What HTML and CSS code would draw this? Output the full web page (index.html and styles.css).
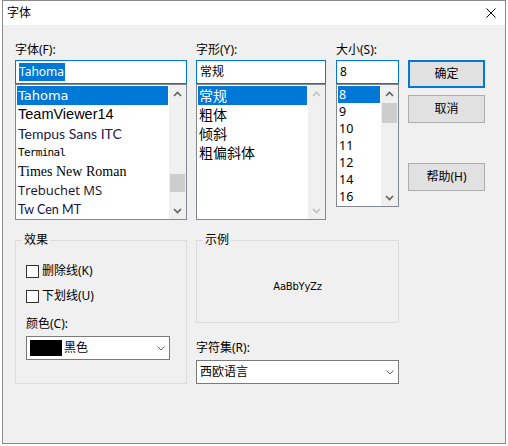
FILE: index.html
```html
<!DOCTYPE html>
<html lang="zh-CN">
<head>
<meta charset="utf-8">
<title>字体</title>
<link rel="stylesheet" href="styles.css">
</head>
<body>
<div class="window">
  <div class="titlebar">
    <span class="title">字体</span>
    <svg class="close" width="10" height="10" viewBox="0 0 10 10"><path d="M0.5 0.5 L9.5 9.5 M9.5 0.5 L0.5 9.5" stroke="#000" stroke-width="1" fill="none"/></svg>
  </div>
  <div class="content">
    <div class="top">
      <div class="col col-font">
        <div class="label">字体(F):</div>
        <div class="edit"><span class="sel">Tahoma</span></div>
        <div class="list list-font">
          <div class="items">
            <div class="item selected f-tahoma">Tahoma</div>
            <div class="item f-team">TeamViewer14</div>
            <div class="item f-tempus">Tempus Sans ITC</div>
            <div class="item f-terminal">Terminal</div>
            <div class="item f-times">Times New Roman</div>
            <div class="item f-treb">Trebuchet MS</div>
            <div class="item f-tw">Tw Cen MT</div>
          </div>
          <div class="vscroll">
            <div class="arrow"><svg width="9" height="6" viewBox="0 0 9 6"><path d="M1 5 L4.5 1.5 L8 5" class="caret"/></svg></div>
            <div class="track"><div class="thumb thumb-font"></div></div>
            <div class="arrow"><svg width="9" height="6" viewBox="0 0 9 6"><path d="M1 1 L4.5 4.5 L8 1" class="caret"/></svg></div>
          </div>
        </div>
      </div>
      <div class="col col-style">
        <div class="label">字形(Y):</div>
        <div class="edit">常规</div>
        <div class="list list-style">
          <div class="items">
            <div class="item selected">常规</div>
            <div class="item">粗体</div>
            <div class="item">倾斜</div>
            <div class="item">粗偏斜体</div>
          </div>
          <div class="vscroll disabled">
            <div class="arrow"><svg width="9" height="6" viewBox="0 0 9 6"><path d="M1 5 L4.5 1.5 L8 5" class="caret"/></svg></div>
            <div class="track"></div>
            <div class="arrow"><svg width="9" height="6" viewBox="0 0 9 6"><path d="M1 1 L4.5 4.5 L8 1" class="caret"/></svg></div>
          </div>
        </div>
      </div>
      <div class="col col-size">
        <div class="label">大小(S):</div>
        <div class="edit">8</div>
        <div class="list list-size">
          <div class="items">
            <div class="item selected">8</div>
            <div class="item">9</div>
            <div class="item">10</div>
            <div class="item">11</div>
            <div class="item">12</div>
            <div class="item">14</div>
            <div class="item">16</div>
          </div>
          <div class="vscroll">
            <div class="arrow"><svg width="9" height="6" viewBox="0 0 9 6"><path d="M1 5 L4.5 1.5 L8 5" class="caret"/></svg></div>
            <div class="track"><div class="thumb thumb-size"></div></div>
            <div class="arrow"><svg width="9" height="6" viewBox="0 0 9 6"><path d="M1 1 L4.5 4.5 L8 1" class="caret"/></svg></div>
          </div>
        </div>
      </div>
      <div class="buttons">
        <div class="btn default">确定</div>
        <div class="btn">取消</div>
        <div class="btn help">帮助(H)</div>
      </div>
    </div>
    <div class="bottom">
      <fieldset class="group effects">
        <legend>效果</legend>
        <div class="effects-body">
          <div class="check"><span class="box"></span>删除线(K)</div>
          <div class="check"><span class="box"></span>下划线(U)</div>
          <div class="label-color">颜色(C):</div>
          <div class="combo combo-color">
            <span class="swatch"></span><span class="combo-text">黑色</span>
            <svg class="chev" width="8" height="5" viewBox="0 0 8 5"><path d="M0.5 0.5 L4 4 L7.5 0.5" stroke="#606060" stroke-width="1" fill="none"/></svg>
          </div>
        </div>
      </fieldset>
      <div class="col-sample">
        <fieldset class="group sample">
          <legend>示例</legend>
          <div class="sample-body">AaBbYyZz</div>
        </fieldset>
        <div class="label-charset">字符集(R):</div>
        <div class="combo combo-charset">
          <span class="combo-text">西欧语言</span>
          <svg class="chev" width="8" height="5" viewBox="0 0 8 5"><path d="M0.5 0.5 L4 4 L7.5 0.5" stroke="#606060" stroke-width="1" fill="none"/></svg>
        </div>
      </div>
    </div>
  </div>
</div>
</body>
</html>
```

FILE: styles.css
```css
html, body {
  margin: 0;
  padding: 0;
  background: #ffffff;
}
body {
  font-family: "Noto Sans", "Noto Sans CJK SC", sans-serif;
  font-size: 12px;
  line-height: 16px;
  color: #000;
}
.window {
  margin-left: 2px;
  width: 502px;
  height: 442px;
  border: 1px solid #8a8a8a;
  background: #f0f0f0;
  display: flex;
  flex-direction: column;
}
.titlebar {
  height: 24px;
  background: #fff;
  display: flex;
  align-items: center;
  justify-content: space-between;
  padding: 0 9px 0 4px;
}
.title {
  font-size: 12px;
  line-height: 16px;
}
.close {
  display: block;
}
.content {
  padding: 17px 0 0 12px;
}
.top {
  display: flex;
  align-items: flex-start;
}
.col-font { width: 172px; }
.col-style { width: 130px; margin-left: 9px; }
.col-size { width: 63px; margin-left: 10px; }
.buttons {
  width: 77px;
  margin-left: 9px;
  margin-top: 18px;
  display: flex;
  flex-direction: column;
}
.label {
  height: 18px;
  line-height: 16px;
  white-space: nowrap;
}
.edit {
  height: 24px;
  box-sizing: border-box;
  border: 1px solid #0078d7;
  background: #fff;
  padding: 2px 3px;
  line-height: 18px;
  white-space: nowrap;
  overflow: hidden;
}
.sel {
  background: #0078d7;
  color: #fff;
  display: inline-block;
  padding: 0 1px 0 0;
}
.list {
  display: flex;
  box-sizing: border-box;
  border: 1px solid #828790;
  background: #fff;
}
.list-font, .list-style { height: 136px; }
.list-size { height: 123px; }
.items {
  flex: 1;
  min-width: 0;
  padding: 1px;
  overflow: hidden;
}
.item {
  height: 19px;
  line-height: 19px;
  padding-left: 1px;
  white-space: nowrap;
  overflow: hidden;
}
.item.selected {
  background: #0078d7;
  color: #fff;
}
.list-style .item {
  font-family: "Noto Sans CJK SC", sans-serif;
  font-size: 14px;
}
.list-size .item {
  height: 17px;
  line-height: 17px;
  font-size: 12.5px;
}
.f-tahoma { font-family: "DejaVu Sans", sans-serif; font-size: 13px; }
.f-team { font-family: "Liberation Sans", sans-serif; font-size: 14.5px; }
.f-tempus { font-family: "Lato", sans-serif; font-size: 14px; color: #20204a; }
.f-terminal { font-family: "DejaVu Sans Mono", monospace; font-size: 11px; letter-spacing: -0.7px; }
.f-times { font-family: "Liberation Serif", serif; font-size: 14px; }
.f-treb { font-family: "Open Sans", sans-serif; font-size: 13px; color: #101030; }
.f-tw { font-family: "Lato", sans-serif; font-size: 12.5px; color: #10104a; }
.vscroll {
  width: 17px;
  display: flex;
  flex-direction: column;
  background: #f0f0f0;
}
.arrow {
  height: 17px;
  display: flex;
  align-items: center;
  justify-content: center;
}
.arrow svg { display: block; }
.caret {
  fill: none;
  stroke: #606060;
  stroke-width: 1.6;
}
.vscroll.disabled .caret { stroke: #c0c0c0; }
.track { flex: 1; }
.thumb {
  background: #cdcdcd;
  margin: 0 1px;
}
.thumb-font { margin-top: 72px; height: 18px; }
.thumb-size { margin-top: 1px; height: 20px; }
.btn {
  height: 28px;
  box-sizing: border-box;
  border: 1px solid #adadad;
  background: #e1e1e1;
  display: flex;
  align-items: center;
  justify-content: center;
}
.btn.default { border: 2px solid #0078d7; }
.btn + .btn { margin-top: 7px; }
.btn.help { margin-top: 40px; }
.bottom {
  display: flex;
  align-items: flex-start;
  margin-top: 12px;
}
.group {
  margin: 0;
  padding: 0;
  border: 1px solid #dcdcdc;
  box-sizing: border-box;
  min-width: 0;
}
.group legend {
  margin-left: 6px;
  padding: 0 2px;
  line-height: 16px;
  font-size: 12px;
}
.effects { width: 172px; height: 152px; }
.effects-body { padding: 15px 0 0 10px; }
.check {
  display: flex;
  align-items: center;
  height: 16px;
  white-space: nowrap;
}
.check + .check { margin-top: 9px; }
.box {
  width: 13px;
  height: 13px;
  box-sizing: border-box;
  border: 1px solid #333;
  background: #fff;
  margin-right: 3px;
}
.label-color {
  margin-top: 12px;
  height: 16px;
}
.combo {
  height: 24px;
  box-sizing: border-box;
  border: 1px solid #7a7a7a;
  background: #fff;
  display: flex;
  align-items: center;
  padding-left: 3px;
}
.combo-text { flex: 1; white-space: nowrap; }
.chev { display: block; margin-right: 4px; }
.combo-color { width: 144px; margin-top: 4px; }
.swatch {
  width: 32px;
  height: 16px;
  background: #000;
  margin-right: 2px;
}
.col-sample { width: 203px; margin-left: 9px; }
.sample { width: 203px; height: 91px; }
.sample-body {
  padding-top: 31px;
  text-align: center;
  font-family: "DejaVu Sans", sans-serif;
  font-size: 10px;
  letter-spacing: -0.25px;
  line-height: 16px;
}
.label-charset {
  margin-top: 17px;
  height: 16px;
}
.combo-charset { margin-top: 4px; }
```
